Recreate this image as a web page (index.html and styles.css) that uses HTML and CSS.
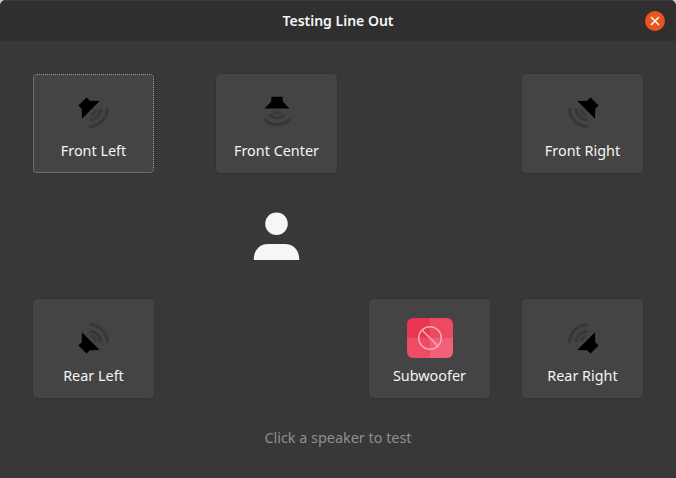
FILE: index.html
```html
<!DOCTYPE html>
<html lang="en">
<head>
<meta charset="utf-8">
<title>Testing Line Out</title>
<link rel="stylesheet" href="styles.css">
</head>
<body>
<svg class="defs" width="0" height="0" aria-hidden="true">
  <symbol id="speaker" viewBox="0 0 48 48">
    <polygon class="cone" points="18.3,7.7 29.7,7.7 29.7,12.4 36.5,19.5 11.5,19.5 18.3,12.4"/>
    <path class="waves" d="M20.5 22.8a5 5 0 0 0 7 0M16.5 25.6a10 10 0 0 0 15 0M11 30a18 18 0 0 0 26 0"/>
  </symbol>
</svg>
<div class="window">
  <header class="titlebar">
    <span class="title">Testing Line Out</span>
    <button class="close" aria-label="Close">
      <svg width="12" height="12" viewBox="0 0 12 12"><path d="M2 2l8 8M10 2l-8 8"/></svg>
    </button>
  </header>
  <main class="content">
    <div class="grid">
      <button class="speaker focused">
        <svg class="icon rot-fl"><use href="#speaker"/></svg>
        <span class="label">Front Left</span>
      </button>
      <button class="speaker">
        <svg class="icon"><use href="#speaker"/></svg>
        <span class="label">Front Center</span>
      </button>
      <span class="empty"></span>
      <button class="speaker">
        <svg class="icon rot-fr"><use href="#speaker"/></svg>
        <span class="label">Front Right</span>
      </button>

      <span class="empty"></span>
      <div class="person">
        <svg width="48" height="48" viewBox="0 0 48 48">
          <circle cx="23.5" cy="11.7" r="11.3"/>
          <path d="M.8 48v-1C.8 38 7 32 15 32h17c8 0 14.2 6 14.2 15v1z"/>
        </svg>
      </div>
      <span class="empty"></span>
      <span class="empty"></span>

      <button class="speaker">
        <svg class="icon rot-rl"><use href="#speaker"/></svg>
        <span class="label">Rear Left</span>
      </button>
      <span class="empty"></span>
      <button class="speaker">
        <svg class="icon" viewBox="0 0 48 48">
          <defs><clipPath id="badge"><rect x="1" y="4" width="46" height="40" rx="6"/></clipPath></defs>
          <g clip-path="url(#badge)">
            <rect class="q1" x="0" y="0" width="24" height="24"/>
            <rect class="q2" x="24" y="0" width="24" height="24"/>
            <rect class="q3" x="0" y="24" width="24" height="24"/>
            <rect class="q4" x="24" y="24" width="24" height="24"/>
          </g>
          <circle class="ban" cx="24" cy="24" r="11.3"/>
          <path class="ban" d="M16 16l16 16"/>
        </svg>
        <span class="label">Subwoofer</span>
      </button>
      <button class="speaker">
        <svg class="icon rot-rr"><use href="#speaker"/></svg>
        <span class="label">Rear Right</span>
      </button>
    </div>
    <p class="hint">Click a speaker to test</p>
  </main>
</div>
</body>
</html>
```
FILE: styles.css
```css
html, body {
  margin: 0;
  height: 100%;
  background: #c9c9c9;
  overflow: hidden;
}
.defs { position: absolute; }
.window {
  height: 478px;
  background: #383838;
  border-radius: 6px 6px 0 0;
  font-family: "Noto Sans", sans-serif;
  font-size: 14.4px;
  overflow: hidden;
}
.titlebar {
  position: relative;
  height: 41px;
  box-sizing: border-box;
  border-top: 1px solid #3c3a3a;
  background: #302e2e;
  display: flex;
  align-items: center;
  justify-content: center;
}
.title {
  color: #f6f6f6;
  font-weight: 600;
  font-size: 14px;
  margin-top: -1px;
}
.close {
  position: absolute;
  right: 11px;
  top: 10px;
  width: 20px;
  height: 20px;
  padding: 0;
  border: 0;
  border-radius: 50%;
  background: #e95420;
  display: flex;
  align-items: center;
  justify-content: center;
}
.close svg path {
  fill: none;
  stroke: #fff;
  stroke-width: 1.5;
}
.content { padding: 32px 0 0 32px; }
.grid {
  display: grid;
  grid-template-columns: 183px 153px 153px 123px;
  grid-template-rows: 101px 124px 101px;
}
.speaker {
  width: 123px;
  height: 101px;
  box-sizing: border-box;
  padding: 15px 0 0;
  margin: 0;
  border: 1px solid #343434;
  border-radius: 5px;
  background: #444444;
  display: flex;
  flex-direction: column;
  align-items: center;
  font: inherit;
}
.focused {
  outline: 1px dotted #999999;
  outline-offset: -2px;
}
.icon {
  width: 48px;
  height: 48px;
  flex: none;
}
.rot-fl { transform: rotate(-45deg); }
.rot-fr { transform: rotate(45deg); }
.rot-rl { transform: rotate(-135deg); }
.rot-rr { transform: rotate(135deg); }
.cone { fill: #000; }
.waves {
  fill: none;
  stroke: #373737;
  stroke-width: 3;
}
.label {
  margin-top: 4px;
  line-height: 20px;
  color: #f4f4f4;
}
.person {
  width: 123px;
  display: flex;
  align-items: center;
  justify-content: center;
}
.person svg { fill: #f6f6f6; }
.q1 { fill: #ea3650; }
.q2 { fill: #ec4a60; }
.q3 { fill: #ee4c64; }
.q4 { fill: #f06078; }
.ban {
  fill: none;
  stroke: #f8a8b4;
  stroke-width: 1.5;
}
.hint {
  margin: 29px 0 0 -32px;
  text-align: center;
  line-height: 20px;
  color: #8f8f8f;
}
```
